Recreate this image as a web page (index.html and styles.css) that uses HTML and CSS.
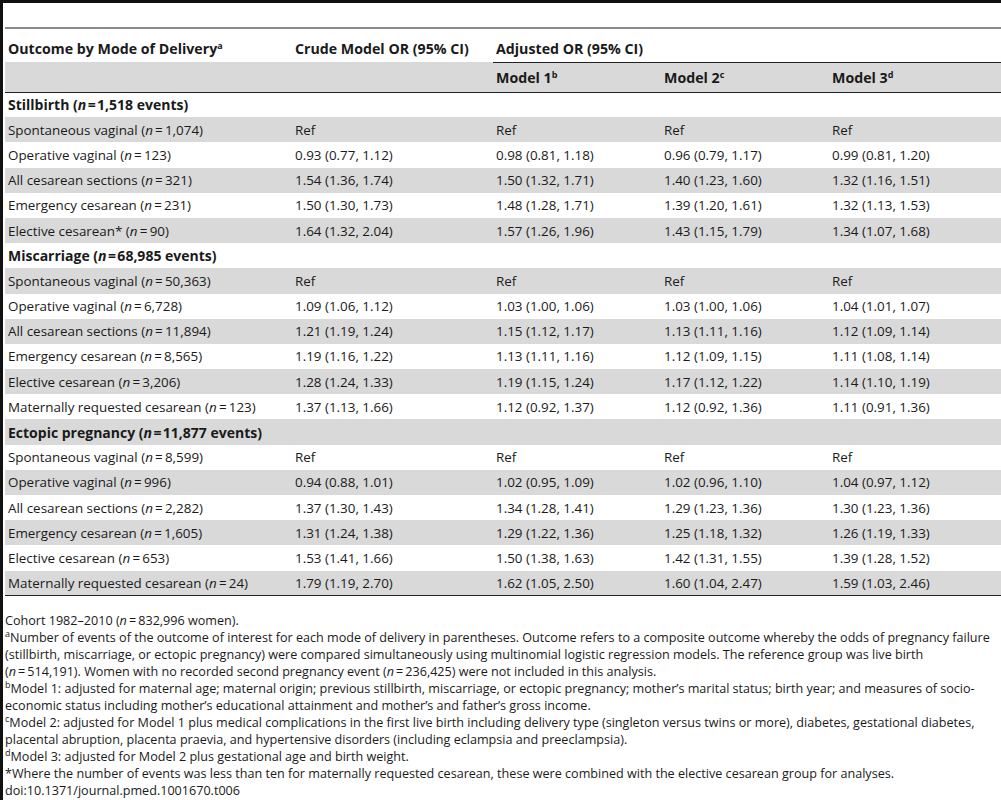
FILE: index.html
```html
<!DOCTYPE html>
<html lang="en">
<head>
    <meta charset="UTF-8">
    <title>Table 6. Odds of subsequent pregnancy outcome by mode of delivery</title>
    <link rel="stylesheet" href="styles.css">
</head>
<body>
    <div class="frame">
        <table class="or-table">
            <colgroup>
                <col class="c-outcome">
                <col class="c-crude">
                <col class="c-model">
                <col class="c-model">
                <col class="c-last">
            </colgroup>
            <thead>
                <tr class="head-top">
                    <th>Outcome by Mode of Delivery<sup>a</sup></th>
                    <th>Crude Model OR (95% CI)</th>
                    <th colspan="3" class="adjusted">Adjusted OR (95% CI)</th>
                </tr>
                <tr class="head-sub">
                    <th></th>
                    <th></th>
                    <th>Model 1<sup>b</sup></th>
                    <th>Model 2<sup>c</sup></th>
                    <th>Model 3<sup>d</sup></th>
                </tr>
            </thead>
            <tbody>
                <tr class="section">
                    <td colspan="5">Stillbirth (<i>n</i>&#8202;=&#8202;1,518 events)</td>
                </tr>
                <tr>
                    <td>Spontaneous vaginal (<i>n</i>&#8201;=&#8201;1,074)</td>
                    <td>Ref</td><td>Ref</td><td>Ref</td><td>Ref</td>
                </tr>
                <tr>
                    <td>Operative vaginal (<i>n</i>&#8201;=&#8201;123)</td>
                    <td>0.93 (0.77, 1.12)</td><td>0.98 (0.81, 1.18)</td><td>0.96 (0.79, 1.17)</td><td>0.99 (0.81, 1.20)</td>
                </tr>
                <tr>
                    <td>All cesarean sections (<i>n</i>&#8201;=&#8201;321)</td>
                    <td>1.54 (1.36, 1.74)</td><td>1.50 (1.32, 1.71)</td><td>1.40 (1.23, 1.60)</td><td>1.32 (1.16, 1.51)</td>
                </tr>
                <tr>
                    <td>Emergency cesarean (<i>n</i>&#8201;=&#8201;231)</td>
                    <td>1.50 (1.30, 1.73)</td><td>1.48 (1.28, 1.71)</td><td>1.39 (1.20, 1.61)</td><td>1.32 (1.13, 1.53)</td>
                </tr>
                <tr>
                    <td>Elective cesarean* (<i>n</i>&#8201;=&#8201;90)</td>
                    <td>1.64 (1.32, 2.04)</td><td>1.57 (1.26, 1.96)</td><td>1.43 (1.15, 1.79)</td><td>1.34 (1.07, 1.68)</td>
                </tr>
                <tr class="section">
                    <td colspan="5">Miscarriage (<i>n</i>&#8202;=&#8202;68,985 events)</td>
                </tr>
                <tr>
                    <td>Spontaneous vaginal (<i>n</i>&#8201;=&#8201;50,363)</td>
                    <td>Ref</td><td>Ref</td><td>Ref</td><td>Ref</td>
                </tr>
                <tr>
                    <td>Operative vaginal (<i>n</i>&#8201;=&#8201;6,728)</td>
                    <td>1.09 (1.06, 1.12)</td><td>1.03 (1.00, 1.06)</td><td>1.03 (1.00, 1.06)</td><td>1.04 (1.01, 1.07)</td>
                </tr>
                <tr>
                    <td>All cesarean sections (<i>n</i>&#8201;=&#8201;11,894)</td>
                    <td>1.21 (1.19, 1.24)</td><td>1.15 (1.12, 1.17)</td><td>1.13 (1.11, 1.16)</td><td>1.12 (1.09, 1.14)</td>
                </tr>
                <tr>
                    <td>Emergency cesarean (<i>n</i>&#8201;=&#8201;8,565)</td>
                    <td>1.19 (1.16, 1.22)</td><td>1.13 (1.11, 1.16)</td><td>1.12 (1.09, 1.15)</td><td>1.11 (1.08, 1.14)</td>
                </tr>
                <tr>
                    <td>Elective cesarean (<i>n</i>&#8201;=&#8201;3,206)</td>
                    <td>1.28 (1.24, 1.33)</td><td>1.19 (1.15, 1.24)</td><td>1.17 (1.12, 1.22)</td><td>1.14 (1.10, 1.19)</td>
                </tr>
                <tr>
                    <td>Maternally requested cesarean (<i>n</i>&#8201;=&#8201;123)</td>
                    <td>1.37 (1.13, 1.66)</td><td>1.12 (0.92, 1.37)</td><td>1.12 (0.92, 1.36)</td><td>1.11 (0.91, 1.36)</td>
                </tr>
                <tr class="section">
                    <td colspan="5">Ectopic pregnancy (<i>n</i>&#8202;=&#8202;11,877 events)</td>
                </tr>
                <tr>
                    <td>Spontaneous vaginal (<i>n</i>&#8201;=&#8201;8,599)</td>
                    <td>Ref</td><td>Ref</td><td>Ref</td><td>Ref</td>
                </tr>
                <tr>
                    <td>Operative vaginal (<i>n</i>&#8201;=&#8201;996)</td>
                    <td>0.94 (0.88, 1.01)</td><td>1.02 (0.95, 1.09)</td><td>1.02 (0.96, 1.10)</td><td>1.04 (0.97, 1.12)</td>
                </tr>
                <tr>
                    <td>All cesarean sections (<i>n</i>&#8201;=&#8201;2,282)</td>
                    <td>1.37 (1.30, 1.43)</td><td>1.34 (1.28, 1.41)</td><td>1.29 (1.23, 1.36)</td><td>1.30 (1.23, 1.36)</td>
                </tr>
                <tr>
                    <td>Emergency cesarean (<i>n</i>&#8201;=&#8201;1,605)</td>
                    <td>1.31 (1.24, 1.38)</td><td>1.29 (1.22, 1.36)</td><td>1.25 (1.18, 1.32)</td><td>1.26 (1.19, 1.33)</td>
                </tr>
                <tr>
                    <td>Elective cesarean (<i>n</i>&#8201;=&#8201;653)</td>
                    <td>1.53 (1.41, 1.66)</td><td>1.50 (1.38, 1.63)</td><td>1.42 (1.31, 1.55)</td><td>1.39 (1.28, 1.52)</td>
                </tr>
                <tr>
                    <td>Maternally requested cesarean (<i>n</i>&#8201;=&#8201;24)</td>
                    <td>1.79 (1.19, 2.70)</td><td>1.62 (1.05, 2.50)</td><td>1.60 (1.04, 2.47)</td><td>1.59 (1.03, 2.46)</td>
                </tr>
            </tbody>
        </table>

        <div class="notes">
            <p>Cohort 1982–2010 (<i>n</i>&#8201;=&#8201;832,996 women).</p>
            <p><sup>a</sup>Number of events of the outcome of interest for each mode of delivery in parentheses. Outcome refers to a composite outcome whereby the odds of pregnancy failure (stillbirth, miscarriage, or ectopic pregnancy) were compared simultaneously using multinomial logistic regression models. The reference group was live birth <span class="nw">(<i>n</i>&#8201;=&#8201;514,191).</span> Women with no recorded second pregnancy event <span class="nw">(<i>n</i>&#8201;=&#8201;236,425)</span> were not included in this analysis.</p>
            <p><sup>b</sup>Model 1: adjusted for maternal age; maternal origin; previous stillbirth, miscarriage, or ectopic pregnancy; mother’s marital status; birth year; and measures of socio-economic status including mother’s educational attainment and mother’s and father’s gross income.</p>
            <p><sup>c</sup>Model 2: adjusted for Model 1 plus medical complications in the first live birth including delivery type (singleton versus twins or more), diabetes, gestational diabetes, placental abruption, placenta praevia, and hypertensive disorders (including eclampsia and preeclampsia).</p>
            <p><sup>d</sup>Model 3: adjusted for Model 2 plus gestational age and birth weight.</p>
            <p>*Where the number of events was less than ten for maternally requested cesarean, these were combined with the elective cesarean group for analyses.</p>
            <p>doi:10.1371/journal.pmed.1001670.t006</p>
        </div>
    </div>
</body>
</html>
```

FILE: styles.css
```css
* {
    margin: 0;
    padding: 0;
    box-sizing: border-box;
}

body {
    font-family: 'Open Sans', 'Noto Sans', sans-serif;
    font-size: 13.4px;
    color: #1a1a1a;
    background: #fff;
    overflow: hidden;
}

.frame {
    width: 1001px;
    height: 800px;
    border-left: 3px solid #111;
    border-top: 3px solid #111;
    padding: 24px 0 0 2px;
}

.or-table {
    width: 996px;
    table-layout: fixed;
    border-collapse: collapse;
    border-top: 2px solid #8a8a8a;
}

.c-outcome { width: 287px; }
.c-crude { width: 201px; }
.c-model { width: 168px; }
.c-last { width: 172px; }

th, td {
    text-align: left;
    padding: 0 3px;
    white-space: nowrap;
    font-weight: normal;
}

th {
    font-size: 14.2px;
    font-weight: bold;
}

sup {
    font-size: 9px;
    line-height: 0;
    vertical-align: 5px;
}

.head-top th {
    height: 34px;
    vertical-align: bottom;
    padding-bottom: 4px;
}

.head-top .adjusted {
    border-bottom: 1px solid #222;
}

.head-sub th {
    height: 30px;
    background: #d9d9d9;
    border-bottom: 1.5px solid #222;
}

tbody tr {
    height: 25.2px;
}

tbody tr:nth-child(even) td {
    background: #d9d9d9;
}

tbody tr:last-child td {
    border-bottom: 1px solid #222;
}

.section td {
    font-size: 14px;
    font-weight: bold;
}

.notes {
    margin-top: 16px;
    font-size: 12.6px;
    line-height: 17px;
}

.nw {
    white-space: nowrap;
}
```
